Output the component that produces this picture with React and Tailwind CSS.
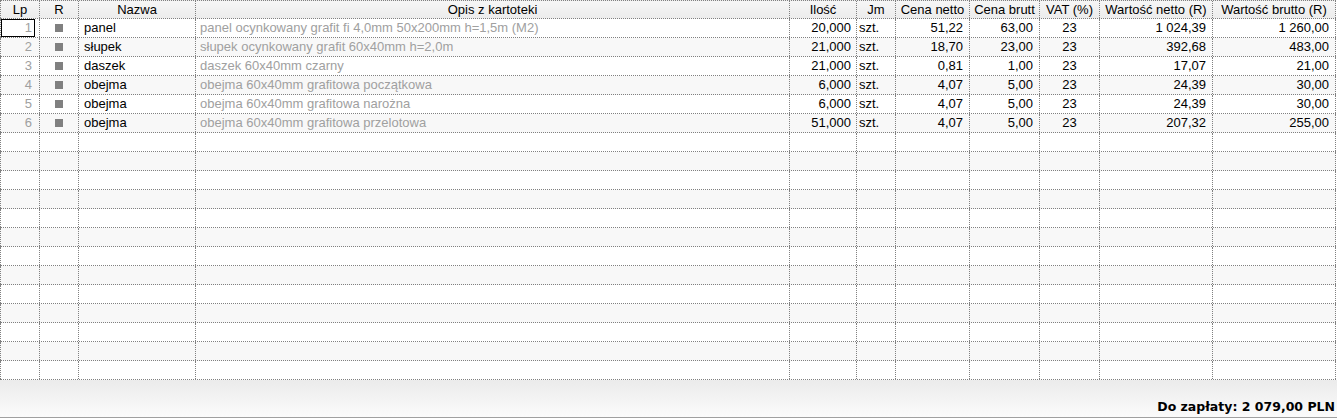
import React from 'react';

// Column definitions: widths match the grid lines of the original view
const columns = [
  { key: 'lp', label: 'Lp', width: 'w-[40px] border-l', align: 'text-right pr-[4px]' },
  { key: 'r', label: 'R', width: 'w-[39px]', align: 'text-center' },
  { key: 'nazwa', label: 'Nazwa', width: 'w-[117px]', align: 'text-left pl-[5px]' },
  { key: 'opis', label: 'Opis z kartoteki', width: 'w-[594px]', align: 'text-left pl-[4px]' },
  { key: 'ilosc', label: 'Ilość', width: 'w-[67px]', align: 'text-right pr-[5px]' },
  { key: 'jm', label: 'Jm', width: 'w-[39px]', align: 'text-left pl-[2px]' },
  { key: 'netto', label: 'Cena netto', width: 'w-[74px]', align: 'text-right pr-[6px]' },
  { key: 'brutto', label: 'Cena brutt', width: 'w-[70px]', align: 'text-right pr-[6px]' },
  { key: 'vat', label: 'VAT (%)', width: 'w-[60px]', align: 'text-center' },
  { key: 'wnetto', label: 'Wartość netto (R)', width: 'w-[113px]', align: 'text-right pr-[6px]' },
  { key: 'wbrutto', label: 'Wartość brutto (R)', width: 'w-[123px]', align: 'text-right pr-[6px]' },
];

const items = [
  { nazwa: 'panel', opis: 'panel ocynkowany grafit fi 4,0mm 50x200mm h=1,5m (M2)', ilosc: '20,000', jm: 'szt.', netto: '51,22', brutto: '63,00', vat: '23', wnetto: '1 024,39', wbrutto: '1 260,00' },
  { nazwa: 'słupek', opis: 'słupek ocynkowany grafit 60x40mm h=2,0m', ilosc: '21,000', jm: 'szt.', netto: '18,70', brutto: '23,00', vat: '23', wnetto: '392,68', wbrutto: '483,00' },
  { nazwa: 'daszek', opis: 'daszek 60x40mm czarny', ilosc: '21,000', jm: 'szt.', netto: '0,81', brutto: '1,00', vat: '23', wnetto: '17,07', wbrutto: '21,00' },
  { nazwa: 'obejma', opis: 'obejma 60x40mm grafitowa początkowa', ilosc: '6,000', jm: 'szt.', netto: '4,07', brutto: '5,00', vat: '23', wnetto: '24,39', wbrutto: '30,00' },
  { nazwa: 'obejma', opis: 'obejma 60x40mm grafitowa narożna', ilosc: '6,000', jm: 'szt.', netto: '4,07', brutto: '5,00', vat: '23', wnetto: '24,39', wbrutto: '30,00' },
  { nazwa: 'obejma', opis: 'obejma 60x40mm grafitowa przelotowa', ilosc: '51,000', jm: 'szt.', netto: '4,07', brutto: '5,00', vat: '23', wnetto: '207,32', wbrutto: '255,00' },
];

const TOTAL_ROWS = 19;

function Cell({ col, children, extra = '' }) {
  return (
    <div
      className={`${col.width} ${col.align} shrink-0 h-full border-r border-dotted border-[#808080] overflow-hidden whitespace-nowrap ${extra}`}
    >
      {children}
    </div>
  );
}

function ItemRow({ index, item }) {
  const rowBg = index % 2 === 1 ? 'bg-[#f8f8f8]' : 'bg-white';
  return (
    <div className={`flex h-[19px] border-b border-dotted border-[#808080] leading-[18px] ${rowBg}`}>
      {columns.map((col) => {
        if (col.key === 'lp') {
          return (
            <Cell key={col.key} col={col} extra="text-[#a0a0a0]">
              {item ? (
                <div className={`h-full pr-[3px] ${index === 0 ? 'outline outline-1 outline-black -outline-offset-1' : ''}`}>
                  {index + 1}
                </div>
              ) : null}
            </Cell>
          );
        }
        if (col.key === 'r') {
          return (
            <Cell key={col.key} col={col} extra="flex items-center justify-center">
              {item && <span className="block w-[8px] h-[8px] bg-[#808080]" />}
            </Cell>
          );
        }
        const color = col.key === 'opis' ? 'text-[#a0a0a0]' : 'text-black';
        return (
          <Cell key={col.key} col={col} extra={color}>
            {item ? item[col.key] : ''}
          </Cell>
        );
      })}
    </div>
  );
}

export default function App() {
  const rows = Array.from({ length: TOTAL_ROWS }, (_, i) => items[i] || null);

  return (
    <div
      className="w-[1337px] h-[419px] bg-white flex flex-col overflow-hidden text-[13px]"
      style={{ fontFamily: '"Liberation Sans", Arial, sans-serif' }}
    >
      <div className="w-[1336px]">
        {/* header */}
        <div className="flex h-[19px] border-t border-b border-dotted border-[#808080] bg-gradient-to-b from-[#f6f6f6] to-[#ececec] leading-[17px] text-black">
          {columns.map((col) => (
            <div
              key={col.key}
              className={`${col.width} shrink-0 h-full text-center border-r border-dotted border-[#808080] overflow-hidden whitespace-nowrap`}
            >
              {col.label}
            </div>
          ))}
        </div>

        {/* body */}
        {rows.map((item, i) => (
          <ItemRow key={i} index={i} item={item} />
        ))}
      </div>

      {/* summary bar */}
      <div className="h-[38px] shrink-0 flex items-end justify-end pr-[2px] pb-[3px] bg-gradient-to-b from-[#ebebeb] to-[#fbfbfb] border-b border-[#a0a0a0]">
        <span
          className="font-bold text-[12.5px] text-black leading-[15px]"
          style={{ fontFamily: '"DejaVu Sans", Verdana, sans-serif' }}
        >
          Do zapłaty: 2 079,00 PLN
        </span>
      </div>
    </div>
  );
}
